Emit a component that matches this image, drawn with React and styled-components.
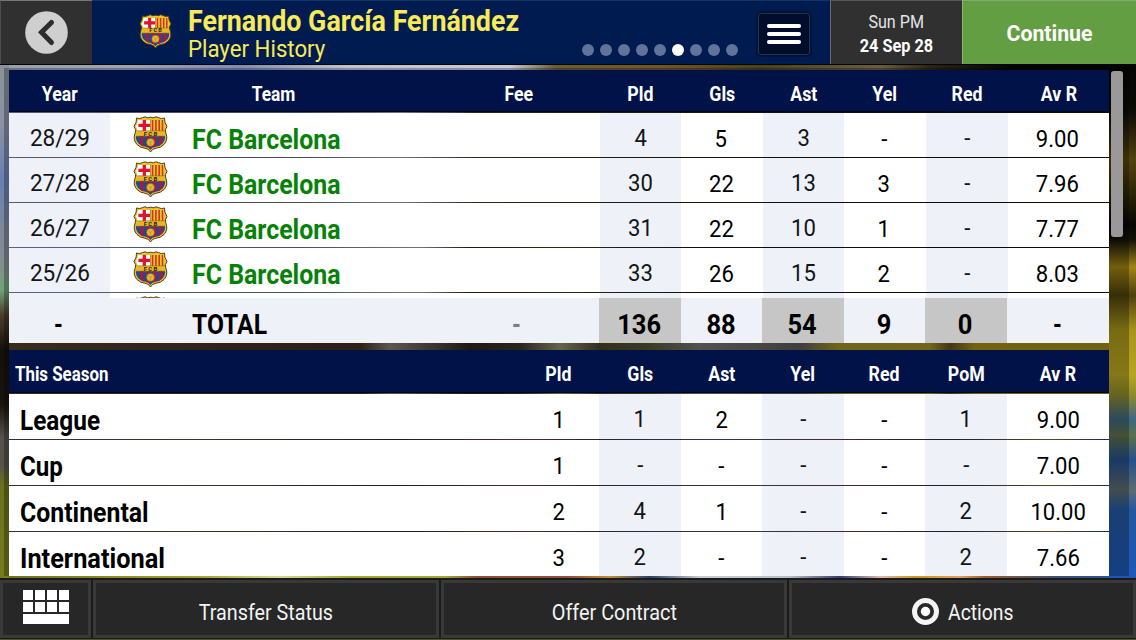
import React from 'react';
import styled, { createGlobalStyle } from 'styled-components';

const Global = createGlobalStyle`
  * { box-sizing: border-box; }
  html, body { margin: 0; padding: 0; background: #000; overflow: hidden; }
  button { font: inherit; color: inherit; border: 0; padding: 0; background: none; }
`;

const Screen = styled.div`
  width: 1136px;
  height: 640px;
  display: flex;
  flex-direction: column;
  overflow: hidden;
  font-family: Roboto, "Liberation Sans", sans-serif;
  background-color: #1a1608;
  background-repeat: no-repeat;
  background-image:
    linear-gradient(180deg, #8c929c 0, #8a92a4 60px, #6680b4 115px, #7f8799 165px, #868b93 195px, #6fa377 225px, #4b3d2a 250px, #15100a 285px, #1a140c 340px, #55504e 372px, #56524a 400px, #6a701c 420px, #767c1c 515px),
    linear-gradient(180deg, #050505 0, #0a0a06 45px, #54420e 95px, #302808 125px, #060604 160px, #14120a 175px, #a08414 202px, #4c400c 230px, #a8941a 265px, #b8a622 310px, #8e8a2c 330px, #3c6684 355px, #5e7048 370px, #24508c 395px, #5c6c70 425px, #2458a0 445px, #1e58b8 515px),
    linear-gradient(90deg, #999ea8 0, #9ca4b4 130px, #7c8cb8 240px, #c0c4d0 350px, #c6cad6 510px, #6a5c34 555px, #70542c 660px, #4c401c 760px, #6c5c3c 880px, #2c2414 930px, #050505 1010px),
    linear-gradient(90deg, #788298 0, #606880 300px, #a0a0a8 400px, #383424 480px, #2c2818 620px, #18140c 800px, #100c04 1109px),
    linear-gradient(90deg, #788cb4 0, #60708c 300px, #a0a0a8 420px, #2c2414 470px, #40381c 560px, #141420 700px, #0c0c10 1109px),
    linear-gradient(90deg, #4e3d28 0, #3f2d1c 360px, #80786c 390px, #2a241a 470px, #3a3428 520px, #8a8c64 560px, #46402c 600px, #50502c 645px, #74726c 700px, #5a5654 800px, #a08c20 840px, #a08c24 930px, #5e4a24 950px, #a08a18 975px, #9c8818 1136px),
    linear-gradient(90deg, #444 0, #54483c 200px, #302828 400px, #6c4038 520px, #38344a 600px, #4c4868 720px, #603c38 850px, #242c4c 950px, #74642c 1050px, #28406c 1109px),
    linear-gradient(90deg, #6a701c 0, #a0a430 200px, #d0d890 280px, #a0a82c 350px, #a0a83c 445px, #90502c 475px, #945038 570px, #c48c34 610px, #28406c 650px, #c8ccd0 700px, #b8bcc4 790px, #303c74 840px, #e0b8b0 880px, #c89424 915px, #e0a060 960px, #985c2c 985px, #3c5078 1060px, #1e58a8 1136px);
  background-size: 9px 515px, 27px 515px, 1136px 46px, 1136px 115px, 1136px 74px, 1136px 94px, 1136px 176px, 1136px 10px;
  background-position: 0 65px, 1109px 65px, 0 65px, 0 111px, 0 226px, 0 300px, 0 394px, 0 570px;
`;

const Text = styled.span`
  display: inline-block;
  line-height: 1;
  white-space: nowrap;
  font-size: ${p => p.$size}px;
  font-weight: ${p => (p.$bold ? 700 : 400)};
  color: ${p => p.$color || 'inherit'};
  transform: scaleX(${p => p.$fit || 1});
  transform-origin: ${p => (p.$left ? 'left' : 'center')} center;
`;

/* ---------- header ---------- */

const Header = styled.header`
  flex: none;
  display: grid;
  grid-template-columns: 92px 738px 132px 174px;
  height: 65px;
  border-bottom: 1px solid #030509;
`;

const BackButton = styled.button`
  display: grid;
  place-items: center;
  background: #303030;
  border-top: 1px solid #77797c;
  border-left: 1px solid #4c4e50;
`;

const TitleBar = styled.div`
  display: flex;
  background: #001b50;
  border-top: 1px solid #0a376c;
`;

const CrestSlot = styled.div`
  width: 96px;
  padding: 13px 0 0 47px;
`;

const Titles = styled.div`
  width: 394px;
  display: flex;
  flex-direction: column;
  gap: 2px;
  padding-top: 6px;
  color: #f8ea58;
`;

const Dots = styled.div`
  width: 176px;
  display: flex;
  gap: 6px;
  padding: 43px 0 0 0;
`;

const Dot = styled.i`
  width: 12px;
  height: 12px;
  border-radius: 50%;
  background: ${p => (p.$on ? '#fff' : '#62739a')};
`;

const MenuButton = styled.button`
  width: 52px;
  height: 42px;
  margin: 12px 0 0 0;
  display: flex;
  flex-direction: column;
  align-items: center;
  justify-content: center;
  gap: 4px;
  background: #010d2b;
  border: 1px solid #27334b;
  border-radius: 3px;
  box-shadow: 0 0 0 2px #01133a;
`;

const MenuBar = styled.i`
  width: 34px;
  height: 4px;
  border-radius: 2px;
  background: #fff;
`;

const DateBox = styled.div`
  display: flex;
  flex-direction: column;
  align-items: center;
  gap: 6px;
  padding-top: 13px;
  color: #fff;
  background: #303030;
  border-top: 1px solid #55585b;
  border-left: 1px solid #6a6e75;
`;

const ContinueButton = styled.button`
  display: grid;
  place-items: center;
  padding: 1px 1px 0 0;
  color: #fff;
  background: #649e42;
  border-top: 1px solid #86a874;
  border-left: 1px solid #8cb673;
`;

/* ---------- tables ---------- */

const Stage = styled.main`
  flex: none;
  height: 513px;
  padding: 3px 7px 0 4px;
`;

const Panel = styled.div`
  height: 508px;
  display: grid;
  grid-template-columns: 1100px 12px;
  column-gap: 2px;
  padding: 2px 0 0 5px;
  background: rgba(0, 0, 0, 0.28);
`;

const Tables = styled.div`
  display: flex;
  flex-direction: column;
`;

const ScrollThumb = styled.div`
  height: 166px;
  margin-top: 1px;
  border-radius: 3px;
  background: #9b989a;
`;

const historyCols = '101px 490px 81px 82px 81px 82px 82px 101px';
const totalCols = '101px 489px 82px 81px 82px 81px 82px 102px';
const seasonCols = '509px 81px 82px 81px 82px 81px 82px 102px';

const HeadRow = styled.div`
  flex: none;
  display: grid;
  grid-template-columns: ${p => p.$cols};
  height: ${p => p.$h}px;
  margin-bottom: 1px;
  color: #fff;
  background: #001248;
  border-bottom: 1px solid #000820;
`;

const HeadCell = styled.div`
  display: flex;
  align-items: center;
  justify-content: ${p => (p.$left ? 'flex-start' : 'center')};
  padding: 8px 0 0 ${p => p.$indent || 0}px;
`;

const TeamHead = styled.div`
  display: grid;
  grid-template-columns: 327px 163px;
`;

const HistoryList = styled.div`
  flex: none;
  height: 185px;
  overflow: hidden;
  display: flex;
  flex-direction: column;
  gap: 1px;
`;

const Row = styled.div`
  flex: none;
  display: grid;
  grid-template-columns: ${p => p.$cols};
  height: ${p => p.$h}px;
`;

const Cell = styled.div`
  display: flex;
  align-items: center;
  justify-content: center;
  padding-top: ${p => (p.$shade ? 5 : 7)}px;
  padding-right: ${p => p.$nudge || 0}px;
  color: ${p => (p.$shade ? '#131519' : '#000')};
  background: ${p => (p.$shade ? '#eef1f7' : '#fff')};
`;

const TeamCell = styled.div`
  display: grid;
  grid-template-columns: 82px 1fr;
  align-items: center;
  background: #fff;
  color: #068206;
`;

const CrestCell = styled.div`
  align-self: start;
  padding: 3px 0 0 23px;
`;

const TeamName = styled.div`
  display: flex;
  padding-top: 10px;
`;

const NameCell = styled.div`
  display: flex;
  align-items: center;
  padding: 8px 0 0 11px;
  background: #fff;
  color: #000;
`;

const TotalCell = styled.div`
  display: flex;
  align-items: center;
  justify-content: center;
  padding: 9px 1px 0 0;
  color: #000;
  background: ${p => (p.$dark ? '#c6c6c6' : '#eef1f7')};
`;

const TotalName = styled.div`
  display: grid;
  grid-template-columns: 82px 243px 164px;
  align-items: center;
  padding-top: 9px;
  background: #eef1f7;
`;

const FeeDash = styled.div`
  text-align: center;
  color: #7b7d81;
`;

const SeasonTable = styled.section`
  margin-top: 7px;
  height: 226px;
  overflow: hidden;
  display: flex;
  flex-direction: column;
`;

const SeasonList = styled.div`
  display: flex;
  flex-direction: column;
  gap: 1px;
`;

/* ---------- footer ---------- */

const Footer = styled.footer`
  flex: none;
  height: 62px;
  display: grid;
  grid-template-columns: 91px 346px 346px 1fr;
  column-gap: 2px;
  padding: 2px 0 1px 0;
  background: #1b1b1a;
  border-bottom: 1px solid #53551f;
`;

const FooterButton = styled.button`
  display: flex;
  align-items: center;
  justify-content: center;
  gap: 9px;
  padding: ${p => (p.$icon ? '0 0 4px 0' : '7px 0 0 0')};
  color: #f3f3f3;
  background: #272727;
  border: 3px solid #393939;
`;

const ActionLabel = styled.span`
  display: flex;
  align-items: center;
  gap: 9px;
  padding-left: 10px;
`;

/* ---------- drawings ---------- */

const BackIcon = () => (
  <svg width="43" height="43" viewBox="0 0 43 43">
    <circle cx="21.5" cy="21.5" r="21.3" fill="#cfcfcf" />
    <path d="M26.5 11.500 16.500 21.300 26.500 31.500" fill="none" stroke="#2d2d2d" strokeWidth="5" strokeLinecap="round" strokeLinejoin="miter" />
  </svg>
);

const shield =
  'M3.5 2 Q6.5 3.4 9.5 1.6 L12 .8 Q14.5 2.6 17.5 1.2 Q20.5 2.6 23 .8 L25.500 1.6 Q28.5 3.4 31.5 2 Q31 6 34 10.500 Q31.300 13.500 32.800 17 Q35.500 23.500 31 28.500 Q27.500 32 23 32.200 Q19 32.800 17.500 36 Q16 32.800 12 32.200 Q7.500 32 4 28.500 Q-.5 23.500 2.200 17 Q3.700 13.500 1 10.500 Q4 6 3.500 2Z';

const Crest = ({ w, h, id, lettered = true }) => (
  <svg width={w} height={h} viewBox="0 0 35 37" preserveAspectRatio="none">
    <defs>
      <clipPath id={id}>
        <path d="M5 4 H30 Q30 7.500 32.200 10.500 Q29.800 13.500 31.300 17 Q33.600 23 29.800 27.300 Q26.500 30.400 22.500 30.800 Q18.800 31.400 17.500 34 Q16.200 31.400 12.500 30.800 Q8.500 30.400 5.200 27.300 Q1.400 23 3.700 17 Q5.200 13.500 2.800 10.500 Q5 7.500 5 4Z" />
      </clipPath>
    </defs>
    <path d={shield} fill="#efc228" stroke="#4d3d1c" strokeWidth="1" />
    <g clipPath={`url(#${id})`}>
      <rect x="0" y="3" width="17.5" height="12" fill="#fff" />
      <path d="M11.300 3.500 V15 M5.400 9.400 H17" stroke="#e0122e" strokeWidth="3.300" />
      <rect x="17.500" y="3" width="17" height="12" fill="#f6c62a" />
      <path d="M19.600 3 V15 M22.900 3 V15 M26.200 3 V15 M29.500 3 V15" stroke="#cf3320" strokeWidth="1.600" />
      <rect x="0" y="14.800" width="35" height="5.400" fill="#e8b722" />
      <rect x="0" y="20.200" width="35" height="16" fill="#254a8c" />
      <path d="M8.800 20 V36 M15.300 20 V36 M21.600 20 V36 M27.600 20 V36" stroke="#a31c45" strokeWidth="3.200" />
      <circle cx="17.500" cy="26.300" r="3.900" fill="#e8b92c" stroke="#8a6a1c" strokeWidth=".5" />
      <path d="M15.600 25 L17.500 26.500 L19.600 25 M17.500 26.500 V29" stroke="#9a781c" strokeWidth=".5" fill="none" />
    </g>
    <path d="M17.500 3.500 V14.800 M2.500 14.800 H32.500 M3 20.200 H32" stroke="#7b5b1b" strokeWidth=".5" />
    {lettered && (
      <text x="18.100" y="19.500" textAnchor="middle" fontFamily="Roboto, sans-serif" fontSize="6" fontWeight="700" letterSpacing="1.200" fill="#2b2410">FCB</text>
    )}
  </svg>
);

const KeyboardIcon = () => (
  <svg width="46" height="34" viewBox="0 0 46 34" fill="#fff">
    {[0, 12, 24, 36].map(x => (
      <React.Fragment key={x}>
        <rect x={x} y="0" width="10" height="10" />
        <rect x={x} y="12" width="10" height="10" />
      </React.Fragment>
    ))}
    <rect x="0" y="24" width="46" height="10" />
  </svg>
);

const TargetIcon = () => (
  <svg width="27" height="29" viewBox="0 0 27 29">
    <circle cx="13.500" cy="14.500" r="13" fill="#151515" />
    <circle cx="13.500" cy="13.500" r="11" fill="#292929" stroke="#f4f4f4" strokeWidth="5" />
    <circle cx="13.500" cy="13.500" r="4.700" fill="#fff" />
  </svg>
);

/* ---------- data ---------- */

const history = [
  ['28/29', '4', '5', '3', '-', '-', '9.00'],
  ['27/28', '30', '22', '13', '3', '-', '7.96'],
  ['26/27', '31', '22', '10', '1', '-', '7.77'],
  ['25/26', '33', '26', '15', '2', '-', '8.03'],
  ['', '', '', '', '', '', ''],
];
const totals = ['136', '88', '54', '9', '0', '-'];
const season = [
  ['League', '1', '1', '2', '-', '-', '1', '9.00', 0.87],
  ['Cup', '1', '-', '-', '-', '-', '-', '7.00', 0.86],
  ['Continental', '2', '4', '1', '-', '-', '2', '10.00', 0.887],
  ['International', '3', '2', '-', '-', '-', '2', '7.66', 0.905],
];

const Head = ({ children, fit = 0.91, ...rest }) => (
  <HeadCell {...rest}>
    <Text $size={19.5} $bold $fit={fit} $left={rest.$left}>{children}</Text>
  </HeadCell>
);

export default function App() {
  return (
    <Screen>
      <Global />
      <Header>
        <BackButton aria-label="Back"><BackIcon /></BackButton>
        <TitleBar>
          <CrestSlot><Crest w={33} h={35} id="crest-title" /></CrestSlot>
          <Titles>
            <Text $size={29} $bold $left $fit={0.925}>Fernando García Fernández</Text>
            <Text $size={23} $left $fit={0.967}>Player History</Text>
          </Titles>
          <Dots>{Array.from({ length: 9 }, (_, i) => <Dot key={i} $on={i === 5} />)}</Dots>
          <MenuButton aria-label="Menu"><MenuBar /><MenuBar /><MenuBar /></MenuButton>
        </TitleBar>
        <DateBox>
          <Text $size={17.5} $fit={0.92} $color="#e4e4e4">Sun PM</Text>
          <Text $size={17.5} $bold $fit={0.93}>24 Sep 28</Text>
        </DateBox>
        <ContinueButton><Text $size={22.5} $bold $fit={0.945}>Continue</Text></ContinueButton>
      </Header>

      <Stage>
        <Panel>
          <Tables>
            <HeadRow $cols={historyCols} $h={42}>
              <Head>Year</Head>
              <TeamHead><Head fit={0.89}>Team</Head><Head>Fee</Head></TeamHead>
              {['Pld', 'Gls', 'Ast', 'Yel', 'Red', 'Av R'].map(t => <Head key={t}>{t}</Head>)}
            </HeadRow>
            <HistoryList>
              {history.map(([year, ...stats], r) => (
                <Row key={r} $cols={historyCols} $h={44}>
                  <Cell $shade><Text $size={24} $fit={0.94}>{year}</Text></Cell>
                  <TeamCell>
                    <CrestCell><Crest w={35} h={37} id={`crest-${r}`} lettered={r < 4} /></CrestCell>
                    <TeamName>{year && <Text $size={27.5} $bold $left $fit={0.905}>FC Barcelona</Text>}</TeamName>
                  </TeamCell>
                  {stats.map((s, i) => {
                    const shade = i % 2 === 0 && i < 5;
                    return (
                      <Cell key={i} $shade={shade} $nudge={shade ? 0 : 2}><Text $size={24} $fit={0.92}>{s}</Text></Cell>
                    );
                  })}
                </Row>
              ))}
            </HistoryList>
            <Row $cols={totalCols} $h={45}>
              <TotalCell><Text $size={28} $bold $fit={0.8}>-</Text></TotalCell>
              <TotalName>
                <span />
                <Text $size={28} $bold $left $fit={0.88}>TOTAL</Text>
                <FeeDash><Text $size={28} $bold $fit={0.8}>-</Text></FeeDash>
              </TotalName>
              {totals.map((t, i) => (
                <TotalCell key={i} $dark={i % 2 === 0 && i < 5}><Text $size={28} $bold $fit={t === '-' ? 0.8 : 0.91}>{t}</Text></TotalCell>
              ))}
            </Row>
            <SeasonTable>
              <HeadRow $cols={seasonCols} $h={43}>
                <Head $left $indent={6} fit={0.865}>This Season</Head>
                {['Pld', 'Gls', 'Ast', 'Yel', 'Red', 'PoM', 'Av R'].map(t => <Head key={t}>{t}</Head>)}
              </HeadRow>
              <SeasonList>
                {season.map(([name, ...rest]) => (
                  <Row key={name} $cols={seasonCols} $h={45}>
                    <NameCell><Text $size={28} $bold $left $fit={rest[7]}>{name}</Text></NameCell>
                    {rest.slice(0, 7).map((s, i) => (
                      <Cell key={i} $shade={i % 2 === 1}><Text $size={24} $fit={0.92}>{s}</Text></Cell>
                    ))}
                  </Row>
                ))}
              </SeasonList>
            </SeasonTable>
          </Tables>
          <ScrollThumb />
        </Panel>
      </Stage>

      <Footer>
        <FooterButton $icon aria-label="Keyboard"><KeyboardIcon /></FooterButton>
        <FooterButton><Text $size={22} $fit={0.897}>Transfer Status</Text></FooterButton>
        <FooterButton><Text $size={22} $fit={0.902}>Offer Contract</Text></FooterButton>
        <FooterButton>
          <ActionLabel><TargetIcon /><Text $size={22} $left $fit={0.88}>Actions</Text></ActionLabel>
        </FooterButton>
      </Footer>
    </Screen>
  );
}
